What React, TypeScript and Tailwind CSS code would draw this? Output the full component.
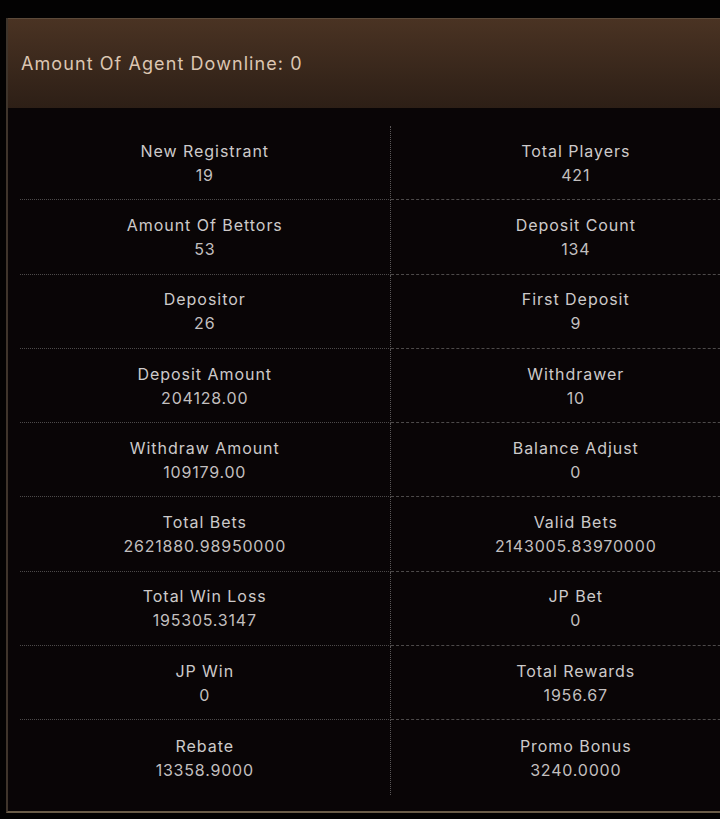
const stats = [
  ['New Registrant', '19', 'Total Players', '421'],
  ['Amount Of Bettors', '53', 'Deposit Count', '134'],
  ['Depositor', '26', 'First Deposit', '9'],
  ['Deposit Amount', '204128.00', 'Withdrawer', '10'],
  ['Withdraw Amount', '109179.00', 'Balance Adjust', '0'],
  ['Total Bets', '2621880.98950000', 'Valid Bets', '2143005.83970000'],
  ['Total Win Loss', '195305.3147', 'JP Bet', '0'],
  ['JP Win', '0', 'Total Rewards', '1956.67'],
  ['Rebate', '13358.9000', 'Promo Bonus', '3240.0000'],
];

function Cell({ label, value, left, last }: { label: string; value: string; left: boolean; last: boolean }) {
  return (
    <div
      className={`h-[74.3px] flex flex-col items-center justify-center
        ${last ? '' : 'border-b border-dashed border-[#4d4a4a]'}
        ${left ? 'border-r border-dotted border-r-[#5a5757]' : ''}`}
    >
      <p className="text-[16px] leading-[24px] tracking-[0.06em] text-[#cdcaca]">{label}</p>
      <p className="text-[16px] leading-[24px] tracking-[0.05em] text-[#c2bfbf]">{value}</p>
    </div>
  );
}

export default function App() {
  return (
    <div className="w-[720px] h-[819px] overflow-hidden bg-[#030202] pt-[18px] pl-[6px]" style={{ fontFamily: 'Inter, "Noto Sans", sans-serif' }}>
      <div className="w-[767px] border-l-2 border-b-2 border-l-[#3e342b] border-b-[#6a5c48] bg-[#090506]">
        <div className="h-[90px] flex items-center px-[13px] border-t border-[#5c4a3a] bg-gradient-to-b from-[#4a3323] to-[#2d1f16]">
          <h1 className="text-[18px] tracking-[0.06em] text-[#dcc6b2]">Amount Of Agent Downline: 0</h1>
        </div>
        <div className="px-[12px] pt-[18px] pb-[16px]">
          <div className="grid grid-cols-2">
            {stats.map((row, i) => (
              <div key={i} className="contents">
                <Cell label={row[0]} value={row[1]} left last={i === stats.length - 1} />
                <Cell label={row[2]} value={row[3]} left={false} last={i === stats.length - 1} />
              </div>
            ))}
          </div>
        </div>
      </div>
    </div>
  );
}
